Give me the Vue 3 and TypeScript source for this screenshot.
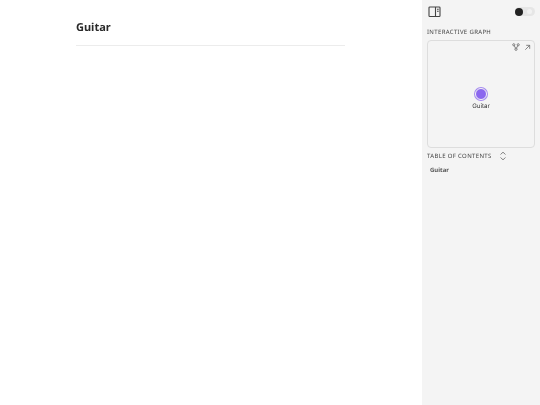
<script setup lang="ts">
const title = 'Guitar'
</script>

<template>
  <div class="page">
    <main class="main">
      <h1 class="title">{{ title }}</h1>
      <div class="rule"></div>
    </main>
    <aside class="side">
      <div class="top">
        <svg class="panel-icon" width="14" height="12" viewBox="0 0 14 12" fill="none" stroke="#444" stroke-width="1.100">
          <rect x="2" y="1" width="11" height="9.500" rx=".8" />
          <path d="M8.500 1v9.500M10 3.300h1.700M10 5.300h1.700" />
        </svg>
        <div class="toggle"><span class="knob"></span><span class="moon"></span></div>
      </div>
      <div class="label graph-label">INTERACTIVE GRAPH</div>
      <div class="graph">
        <div class="graph-tools">
          <svg width="8" height="8" viewBox="0 0 9 9" fill="none" stroke="#666" stroke-width=".9">
            <circle cx="2" cy="2" r="1.200" />
            <circle cx="7" cy="2" r="1.200" />
            <circle cx="4.500" cy="7" r="1.300" />
            <path d="M2.500 3 4 5.900M6.500 3 5 5.900" />
          </svg>
          <svg width="7" height="7" viewBox="0 0 8 8" fill="none" stroke="#666" stroke-width=".9">
            <path d="M1.500 6.500 6.500 1.500M2.500 1.500h4v4" />
          </svg>
        </div>
        <div class="node">
          <span class="dot"></span>
          <span class="node-label">{{ title }}</span>
        </div>
      </div>
      <div class="toc-head">
        <span class="label">TABLE OF CONTENTS</span>
        <svg width="8" height="10" viewBox="0 0 8 10" fill="none" stroke="#666" stroke-width=".8">
          <path d="M1.500 3.500 4 1.200l2.500 2.300M1.500 6.500 4 8.800l2.500-2.300" />
        </svg>
      </div>
      <div class="toc-item">{{ title }}</div>
    </aside>
  </div>
</template>

<style>
html, body { margin: 0; background: #fff; }
</style>

<style scoped>
.page {
  display: flex;
  width: 540px;
  height: 405px;
  overflow: hidden;
  font-family: "Noto Sans", "Open Sans", sans-serif;
  color: #222;
  text-rendering: geometricPrecision;
}
.main {
  flex: 1;
  padding: 18.500px 77px 0 76px;
  min-width: 0;
  will-change: opacity;
}
.title {
  margin: 0;
  font-size: 11px;
  line-height: 18px;
  font-weight: 700;
  color: #2a2a2a;
}
.rule {
  height: 1px;
  margin-top: 8.500px;
  background: #ececec;
}
.side {
  width: 118px;
  box-sizing: border-box;
  padding: 5px 5px 0 5px;
  background: #f4f4f4;
  display: flex;
  flex-direction: column;
}
.top {
  display: flex;
  justify-content: space-between;
  align-items: center;
  height: 13px;
}
.panel-icon { display: block; }
.toggle {
  width: 20px;
  height: 9px;
  border-radius: 5px;
  background: #e6e6e6;
  display: flex;
  align-items: center;
  justify-content: space-between;
  padding: 0 3px 0 0;
  box-sizing: border-box;
}
.knob {
  width: 8px;
  height: 8px;
  border-radius: 50%;
  background: #222;
}
.moon {
  width: 5px;
  height: 5px;
  border-radius: 50%;
  background: #f2f2f2;
}
.label {
  font-size: 6px;
  line-height: 9px;
  letter-spacing: .34px;
  font-weight: 400;
  color: #444;
  will-change: opacity;
}
.graph-label { margin-top: 9.500px; }
.graph {
  position: relative;
  margin-top: 3.500px;
  height: 108px;
  box-sizing: border-box;
  border: 1px solid #ddd;
  border-radius: 4px;
  display: flex;
  align-items: center;
  justify-content: center;
}
.graph-tools {
  position: absolute;
  top: 2px;
  right: 3px;
  display: flex;
  gap: 4px;
  align-items: center;
}
.node {
  display: flex;
  flex-direction: column;
  align-items: center;
  gap: 3px;
  padding-top: 10px;
}
.dot {
  width: 10px;
  height: 10px;
  border-radius: 50%;
  background: #8b67ef;
  border: 1px solid #f4f4f4;
  box-shadow: 0 0 0 1px #a68cf0;
}
.node-label {
  font-family: Inter, "Noto Sans", sans-serif;
  font-size: 6.200px;
  line-height: 8px;
  color: #333;
  will-change: opacity;
}
.toc-head {
  display: flex;
  align-items: center;
  gap: 7px;
  margin-top: 3px;
}
.toc-item {
  margin-top: 5px;
  padding-left: 3px;
  font-size: 6px;
  line-height: 9px;
  font-weight: 700;
  color: #555;
  will-change: opacity;
}
</style>
